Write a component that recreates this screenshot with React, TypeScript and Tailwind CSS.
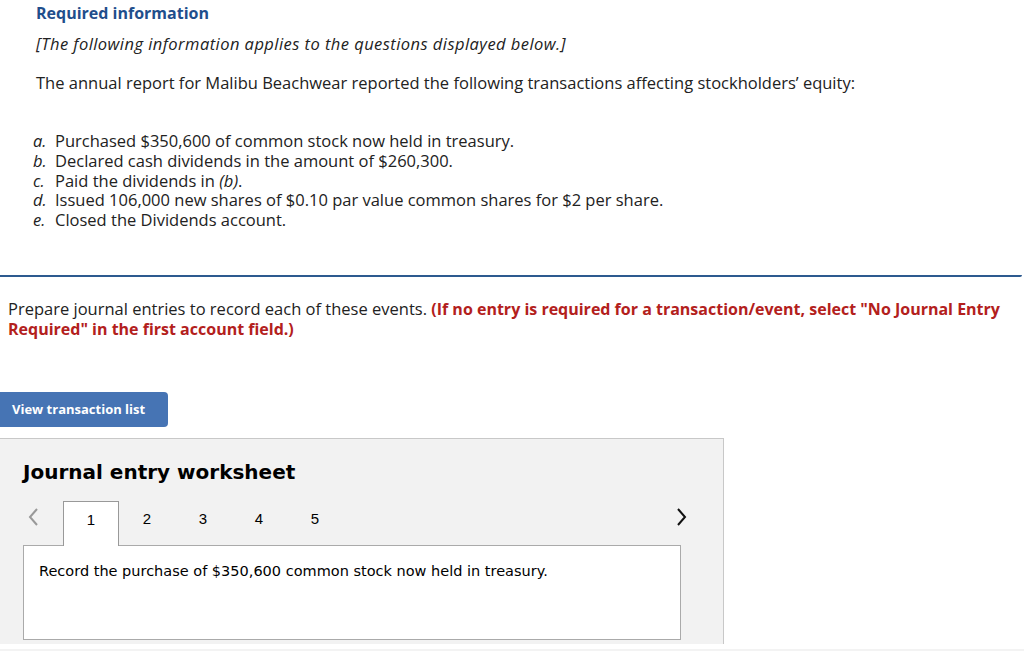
import React from "react";

export default function App() {
  const prox = { fontFamily: "'Open Sans', Lato, sans-serif" };
  return (
    <div className="w-[1024px] h-[653px] bg-white overflow-hidden relative" style={prox}>
      <div className="pl-[36px] pt-[3px]">
        <div className="text-[16px] leading-[20px] font-bold text-[#1f4e8c]">Required information</div>
        <div className="mt-[11px] text-[16.5px] leading-[20px] italic text-[#222] tracking-[0.45px]">[The following information applies to the questions displayed below.]</div>
        <div className="mt-[19px] text-[16.5px] leading-[20px] text-[#222]">
          The annual report for Malibu Beachwear reported the following transactions affecting stockholders’ equity:
        </div>
      </div>
      <div className="pl-[33px] pt-[38px] text-[16.5px] leading-[20px] text-[#222]">
        {[
          ["a.", <>Purchased $350,600 of common stock now held in treasury.</>],
          ["b.", <>Declared cash dividends in the amount of $260,300.</>],
          ["c.", <>Paid the dividends in <i>(b)</i>.</>],
          ["d.", <>Issued 106,000 new shares of $0.10 par value common shares for $2 per share.</>],
          ["e.", <>Closed the Dividends account.</>],
        ].map(([l, t], i) => (
          <div key={i} className="flex h-[19.8px]">
            <span className="w-[22px] italic">{l}</span>
            <span>{t}</span>
          </div>
        ))}
      </div>
      <div className="mt-[45px] w-[1022px] h-[1px] border-b-2 border-[#2d5a8f] rounded-br-[6px]" />
      <div className="pl-[8px] pt-[22px] pr-[8px] text-[16.5px] leading-[19px] text-[#222]">
        Prepare journal entries to record each of these events.{" "}
        <span className="font-bold text-[#b3201c] text-[16px] leading-[19px]">
          (If no entry is required for a transaction/event, select "No Journal Entry Required" in the first account field.)
        </span>
      </div>
      <div className="mt-[53px]">
        <button
          className="h-[35px] w-[168px] bg-[#4674b4] rounded-r-[4px] text-white text-[13px] font-bold text-left pl-[12px]"
          style={{ fontFamily: "'Open Sans', sans-serif" }}
        >
          View transaction list
        </button>
      </div>
      <div className="mt-[11px] w-[724px] h-[206px] bg-[#f2f2f2] border-t border-r border-[#c8c8c8]" style={{ fontFamily: "'DejaVu Sans', Verdana, sans-serif" }}>
        <div className="pl-[23px] pt-[20px] text-[20px] leading-[26px] font-bold text-black">Journal entry worksheet</div>
        <div className="mt-[15px] pl-[23px] flex items-end">
          <div className="w-[40px] h-[45px] flex items-start pt-[7px] justify-start pl-[3px]">
            <svg width="14" height="20" viewBox="0 0 14 20"><path d="M11 2 L4 10 L11 18" fill="none" stroke="#999" strokeWidth="2" /></svg>
          </div>
          <div className="w-[56px] h-[45px] bg-white border border-b-0 border-[#999] text-[15px] text-center pt-[7px] relative top-[1px] z-10" style={{ fontFamily: "'Liberation Sans', Arial, sans-serif" }}>1</div>
          {["2", "3", "4", "5"].map((n) => (
            <div key={n} className="w-[56px] h-[45px] text-[15px] text-center pt-[8px]" style={{ fontFamily: "'Liberation Sans', Arial, sans-serif" }}>{n}</div>
          ))}
          <div className="flex-1" />
          <div className="w-[60px] h-[45px] flex items-start pt-[7px] pl-[12px]">
            <svg width="14" height="20" viewBox="0 0 14 20"><path d="M3 2 L10 10 L3 18" fill="none" stroke="#111" strokeWidth="2" /></svg>
          </div>
        </div>
        <div className="ml-[23px] w-[658px] h-[95px] bg-white border border-[#aaa] pl-[15px] pt-[15px] text-[14.5px] leading-[20px] text-black">
          Record the purchase of $350,600 common stock now held in treasury.
        </div>
      </div>
      <div className="h-[5px]" />
      <div className="h-[2px] bg-[#f3f3f3]" />
    </div>
  );
}
